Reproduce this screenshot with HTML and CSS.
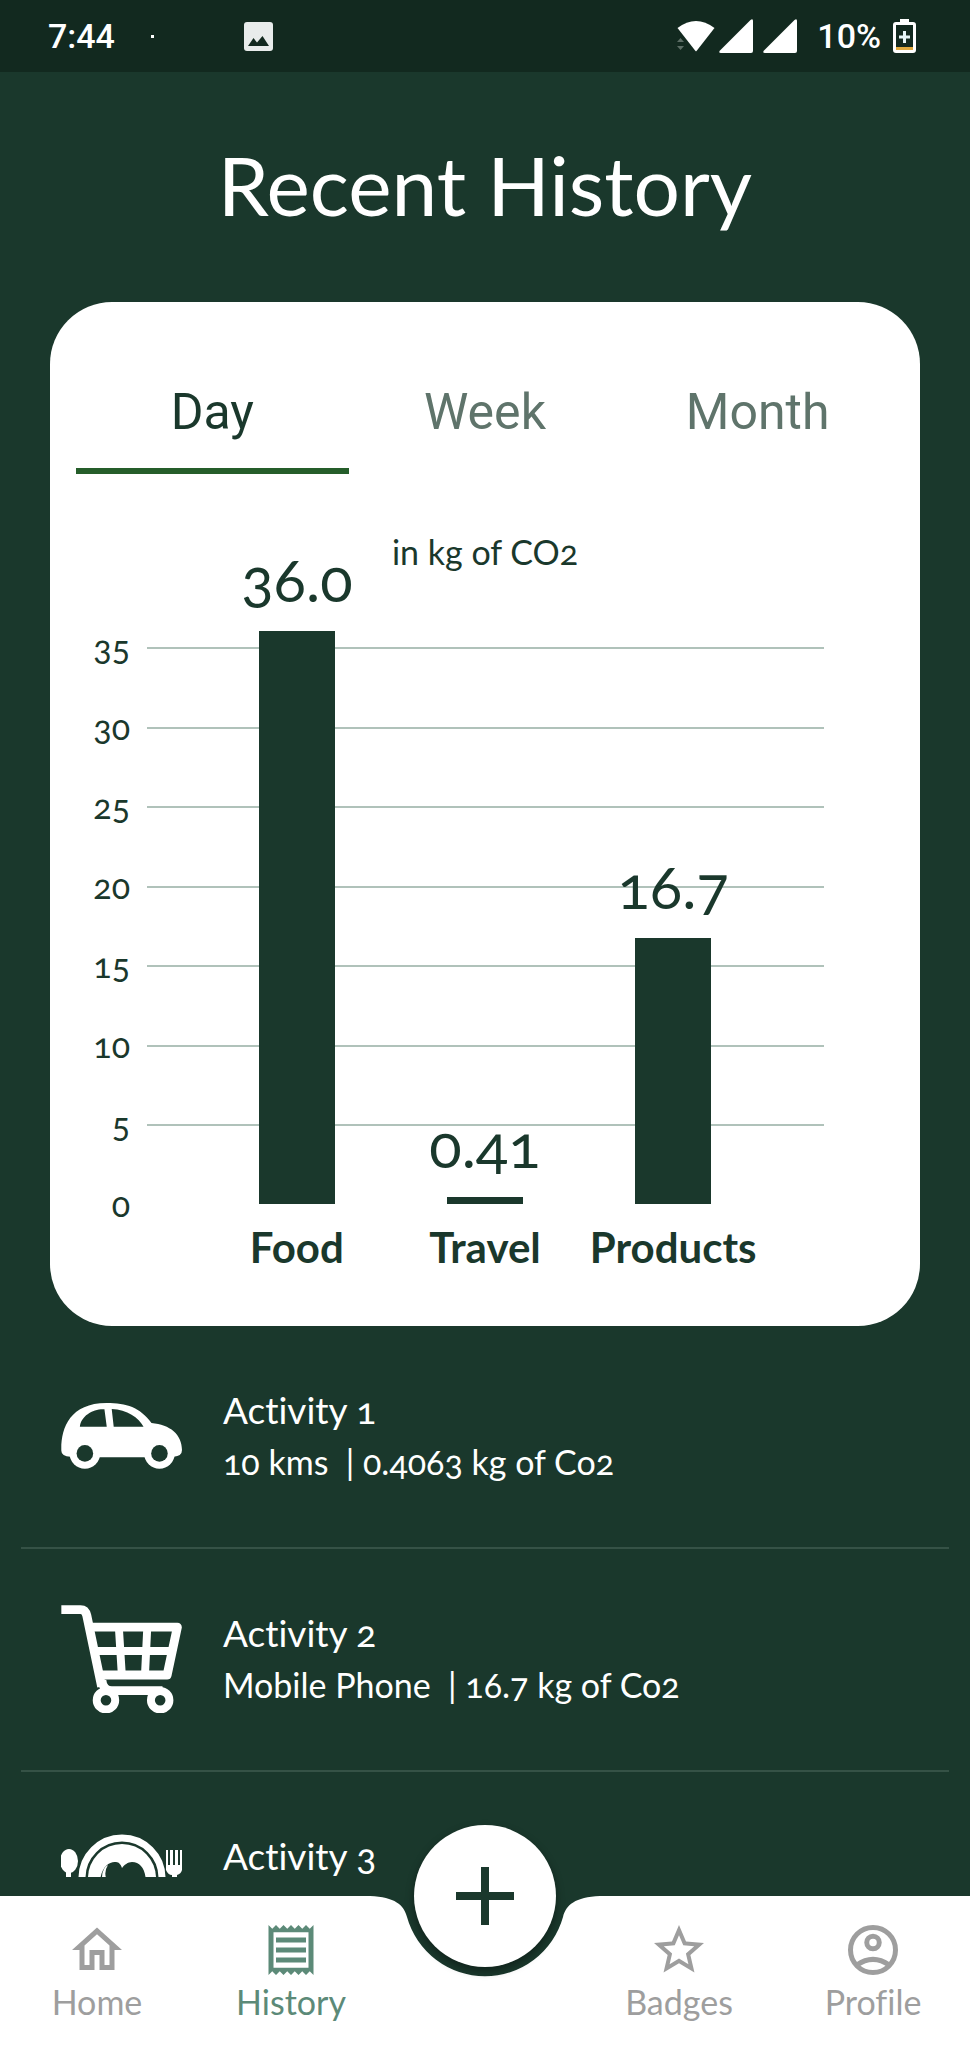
FILE: index.html
```html
<!DOCTYPE html>
<html lang="en">
<head>
<meta charset="utf-8">
<meta name="viewport" content="width=device-width, initial-scale=1">
<title>Recent History</title>
<link rel="stylesheet" href="styles.css">
</head>
<body>
<div class="status-bar">
  <span class="clock">7:44</span>
  <span class="notice-dot"></span>
  <svg class="status-photo" viewBox="0 0 29 29" width="29" height="29" aria-hidden="true">
    <rect width="29" height="29" rx="3" fill="#e8eceb"/>
    <path d="M4 24 L9.500 16 L13 20.500 L18.500 14 L25 24 Z" fill="#12291f"/>
  </svg>
  <div class="status-right">
    <svg viewBox="0 0 40 34" width="40" height="34" aria-hidden="true">
      <path d="M1.500 9 Q20 -5 38.500 9 L20.500 32 Q20 32.500 19.500 32 Z" fill="#fff"/>
      <path d="M1 23 L4.500 19 L8 23 Z M1 27 L4.500 31 L8 27 Z" fill="#5c6d65"/>
    </svg>
    <svg viewBox="0 0 34 34" width="34" height="34" aria-hidden="true"><path d="M2 34 Q-1 34 1 31.500 L31.500 1 Q34 -1 34 2 V32 Q34 34 32 34 Z" fill="#fff"/></svg>
    <svg class="signal-two" viewBox="0 0 34 34" width="34" height="34" aria-hidden="true"><path d="M2 34 Q-1 34 1 31.500 L31.500 1 Q34 -1 34 2 V32 Q34 34 32 34 Z" fill="#fff"/></svg>
    <span class="battery-text">10%</span>
    <svg viewBox="0 0 23 34" width="23" height="34" aria-hidden="true">
      <path d="M7 0 H16 V3 H20 Q23 3 23 6 V31 Q23 34 20 34 H3 Q0 34 0 31 V6 Q0 3 3 3 H7 Z" fill="#fff"/>
      <rect x="3" y="6" width="17" height="22" fill="#12291f"/>
      <rect x="3" y="28" width="17" height="3" fill="#e0aa3e"/>
      <path d="M11.500 12 V24 M6 18 H17" stroke="#e6f6f8" stroke-width="3"/>
    </svg>
  </div>
</div>

<main class="screen">
  <h1 class="title">Recent History</h1>

  <section class="card">
    <div class="tabs" role="tablist">
      <button class="tab tab-active" role="tab" aria-selected="true">Day</button>
      <button class="tab" role="tab" aria-selected="false">Week</button>
      <button class="tab" role="tab" aria-selected="false">Month</button>
    </div>
    <p class="unit">in kg of CO2</p>
    <div class="chart">
      <div class="scale">
        <div class="tick"><span class="tick-label">35</span><span class="tick-line"></span></div>
        <div class="tick"><span class="tick-label">30</span><span class="tick-line"></span></div>
        <div class="tick"><span class="tick-label">25</span><span class="tick-line"></span></div>
        <div class="tick"><span class="tick-label">20</span><span class="tick-line"></span></div>
        <div class="tick"><span class="tick-label">15</span><span class="tick-line"></span></div>
        <div class="tick"><span class="tick-label">10</span><span class="tick-line"></span></div>
        <div class="tick"><span class="tick-label">5</span><span class="tick-line"></span></div>
        <div class="tick tick-zero"><span class="tick-label">0</span></div>
      </div>
      <div class="bars">
        <div class="bar-column"><span class="bar-value">36.0</span><div class="bar" style="height:102.9%"></div></div>
        <div class="bar-column"><span class="bar-value">0.41</span><div class="bar" style="height:1.2%"></div></div>
        <div class="bar-column"><span class="bar-value">16.7</span><div class="bar" style="height:47.7%"></div></div>
      </div>
    </div>
    <div class="categories">
      <span>Food</span><span>Travel</span><span>Products</span>
    </div>
  </section>

  <ul class="activities">
    <li class="activity">
      <svg class="activity-icon" viewBox="63 71 365 199" aria-hidden="true">
        <path fill="#fff" fill-rule="evenodd" d="M64 215 C62 150 88 71 200 71 C262 71 300 84 336 131 C392 136 428 165 428 213 Q428 232 403 233 L400 235 H95 L92 233 Q64 232 64 215 Z M120 143 C123 110 160 88 194 90 L201 143 Z M216 89 C262 91 298 115 312 143 H222 Z"/>
        <circle cx="135" cy="223" r="46" fill="#fff"/><circle cx="135" cy="223" r="25" fill="#1a382c"/>
        <circle cx="360" cy="223" r="46" fill="#fff"/><circle cx="360" cy="223" r="25" fill="#1a382c"/>
      </svg>
      <div class="activity-text">
        <h2 class="activity-name">Activity 1</h2>
        <p class="activity-detail">10 kms&nbsp; | 0.4063 kg of Co2</p>
      </div>
    </li>
    <li class="activity">
      <svg class="activity-icon" viewBox="33 43 366 328" fill="none" stroke="#fff" stroke-linejoin="round" aria-hidden="true">
        <path d="M34 57 H92 Q107 57 111 75 L156 290" stroke-width="27"/>
        <path d="M120 110 H385 L354 255 H150" stroke-width="27"/>
        <path d="M135 182 H370 M208 110 L217 255 M294 110 L287 255" stroke-width="24"/>
        <path d="M157 270 Q160 302 187 302 H340" stroke-width="26"/>
        <circle cx="169" cy="331" r="28" stroke-width="24" fill="#1a382c"/>
        <circle cx="333" cy="331" r="28" stroke-width="24" fill="#1a382c"/>
      </svg>
      <div class="activity-text">
        <h2 class="activity-name">Activity 2</h2>
        <p class="activity-detail">Mobile Phone&nbsp; | 16.7 kg of Co2</p>
      </div>
    </li>
    <li class="activity">
      <svg class="activity-icon" viewBox="0 0 121 96" aria-hidden="true">
        <circle cx="61" cy="44" r="40" fill="none" stroke="#fff" stroke-width="7"/>
        <circle cx="61" cy="44" r="34" fill="#fff"/>
        <path d="M39 50 C39 34 48 27 55 28 C58 28 60 31 61 34 C63 31 67 28 71 28 C80 28 85 36 85 50 C80 66 70 70 61 68 C50 70 39 62 39 50 Z" fill="#1a382c"/>
        <path d="M41 44 Q41 34 47 31 Q43 37 45 44 Z" fill="#fff"/>
        <ellipse cx="8" cy="27" rx="9" ry="12" fill="#fff"/>
        <path d="M5 36 H10 V80 H5 Z" fill="#fff"/>
        <path d="M105 16 V36 Q107 41 111 41 V80 H116 V41 Q120 40 121 36 V16 H119 V31 H117 V16 H114 V31 H112 V16 H109 V31 H107 V16 Z" fill="#fff"/>
      </svg>
      <div class="activity-text">
        <h2 class="activity-name">Activity 3</h2>
      </div>
    </li>
  </ul>
</main>

<nav class="nav">
  <div class="nav-back" aria-hidden="true">
    <span></span>
    <svg viewBox="0 0 230 152" width="230" height="152"><path d="M0 0 C25 1 34 9 37 21 A81 81 0 0 0 193 21 C196 9 205 1 230 0 V152 H0 Z" fill="#fff"/></svg>
    <span></span>
  </div>
  <a class="nav-item" href="#home">
    <svg viewBox="0 0 24 24" width="60" height="60" aria-hidden="true"><path d="M12 5.690l5 4.500V18h-2v-6H9v6H7v-7.810l5-4.500M12 3L2 12h3v8h6v-6h2v6h6v-8h3L12 3z"/></svg>
    <span>Home</span>
  </a>
  <a class="nav-item nav-current" href="#history" aria-current="page">
    <svg viewBox="0 0 24 24" width="60" height="60" aria-hidden="true"><path d="M19.500 3.500L18 2l-1.500 1.500L15 2l-1.500 1.500L12 2l-1.500 1.500L9 2 7.500 3.500 6 2 4.500 3.500 3 2v20l1.500-1.500L6 22l1.500-1.500L9 22l1.500-1.500L12 22l1.500-1.500L15 22l1.500-1.500L18 22l1.500-1.500L21 22V2l-1.500 1.500zM19 19.090H5V4.910h14v14.180zM6 15h12v2H6zm0-4h12v2H6zm0-4h12v2H6z"/></svg>
    <span>History</span>
  </a>
  <button class="add" aria-label="Add activity">
    <svg viewBox="0 0 58 58" width="58" height="58" aria-hidden="true"><path d="M29 0 V58 M0 29 H58" stroke="#1a382c" stroke-width="8"/></svg>
  </button>
  <a class="nav-item" href="#badges">
    <svg viewBox="0 0 24 24" width="60" height="60" aria-hidden="true"><path d="M22 9.240l-7.190-.620L12 2 9.190 8.630 2 9.240l5.460 4.730L5.820 21 12 17.270 18.180 21l-1.630-7.030L22 9.240zM12 15.400l-3.760 2.270 1-4.280-3.320-2.880 4.380-.380L12 6.100l1.710 4.040 4.380.380-3.320 2.880 1 4.280L12 15.400z"/></svg>
    <span>Badges</span>
  </a>
  <a class="nav-item" href="#profile">
    <svg class="stroked" viewBox="0 0 24 24" width="60" height="60" aria-hidden="true"><circle cx="12" cy="12" r="9"/><circle cx="12" cy="9" r="2.500"/><path d="M5.500 18 Q12 13.500 18.500 18"/></svg>
    <span>Profile</span>
  </a>
</nav>
</body>
</html>
```
FILE: styles.css
```css
* { box-sizing: border-box; }

body {
  margin: 0;
  height: 100vh;
  display: flex;
  flex-direction: column;
  background: #1a382c;
  color: #fff;
  font-family: Lato, "Noto Sans", sans-serif;
  font-variant-numeric: oldstyle-nums;
  font-variant-ligatures: none;
}

h1, h2, p, ul { margin: 0; padding: 0; font-weight: 400; }
button { font: inherit; border: 0; padding: 0; background: none; cursor: pointer; }
svg { display: block; flex: none; }

.status-bar {
  flex: none;
  height: 72px;
  padding: 0 54px 0 48px;
  display: flex;
  align-items: center;
  background: #12291f;
  font-family: Roboto, sans-serif;
  font-size: 34px;
  font-weight: 500;
  font-variant-numeric: lining-nums;
}
.notice-dot { width: 3px; height: 3px; margin-left: 36px; background: #fff; }
.status-photo { margin-left: 90px; }
.status-right { margin-left: auto; display: flex; align-items: center; }
.status-right svg + svg { margin-left: 3px; }
.status-right .signal-two { margin-left: 10px; }
.battery-text { margin: 0 12px 0 20px; }

.screen {
  flex: 1;
  min-height: 0;
  overflow: hidden;
}
.title {
  padding: 62px 0 68px;
  text-align: center;
  font-size: 82px;
  line-height: 100px;
}

.card {
  margin: 0 50px;
  padding: 0 26px 51px;
  border-radius: 62px;
  background: #fff;
  color: #1a382c;
}
.tabs { display: grid; grid-template-columns: repeat(3, 1fr); }
.tab {
  padding: 80px 0 26px;
  border-bottom: 6px solid transparent;
  color: #5f746b;
  font-family: Roboto, sans-serif;
  font-size: 50px;
  line-height: 60px;
}
.tab-active { color: #1a382c; border-color: #255d2a; }
.unit {
  margin: 56px 0 73px;
  text-align: center;
  font-size: 34px;
  line-height: 44px;
}

.chart { display: grid; height: 557px; }
.scale, .bars { grid-area: 1 / 1; min-height: 0; }
.scale { display: flex; flex-direction: column; padding-right: 70px; }
.tick { flex: 1; display: flex; align-items: flex-start; gap: 17px; }
.tick-zero { flex: none; height: 0; }
.tick-label {
  width: 54px;
  margin-top: -20px;
  text-align: right;
  font-size: 34px;
  line-height: 40px;
}
.tick-line { flex: 1; height: 2px; background: #b0c2ba; }

.bars, .categories {
  width: 69%;
  justify-self: center;
  display: grid;
  grid-template-columns: repeat(3, 1fr);
}
.bar-column {
  height: 100%;
  min-height: 0;
  display: flex;
  flex-direction: column;
  justify-content: flex-end;
  align-items: center;
}
.bar-value {
  flex: none;
  margin-bottom: 16px;
  font-size: 60px;
  line-height: 72px;
}
.bar { flex: none; width: 76px; background: #1a382c; }
.categories {
  margin: 15px auto 0;
  justify-items: center;
  font-size: 42px;
  font-weight: 700;
  line-height: 56px;
}

.activities { list-style: none; margin: 0 21px; }
.activity {
  display: flex;
  align-items: center;
  gap: 41px;
  padding: 55px 0 56px 40px;
  border-bottom: 2px solid #355246;
}
.activity-icon { width: 121px; max-height: 110px; }
.activity-text { min-height: 110px; padding: 3px 0; line-height: 52px; }
.activity-name { font-size: 37px; }
.activity-detail { font-size: 34px; }

.nav {
  flex: none;
  position: relative;
  margin-top: 19px;
  display: grid;
  grid-template-columns: repeat(5, 1fr);
}
.nav-back {
  position: absolute;
  inset: 0;
  display: flex;
}
.nav-back span { flex: 1; background: #fff; }
.nav-item {
  position: relative;
  padding: 24px 0 25px;
  display: flex;
  flex-direction: column;
  align-items: center;
  gap: 1px;
  color: #9e9e9e;
  fill: currentColor;
  font-size: 34px;
  line-height: 42px;
  text-decoration: none;
}
.nav-current { color: #5c8a78; }
.stroked { fill: none; stroke: currentColor; stroke-width: 2; }
.add {
  position: relative;
  justify-self: center;
  width: 142px;
  height: 142px;
  margin: -71px 0 0;
  display: grid;
  place-items: center;
  border-radius: 50%;
  background: #fff;
  box-shadow: 0 4px 8px rgba(0, 0, 0, 0.4);
}
```
